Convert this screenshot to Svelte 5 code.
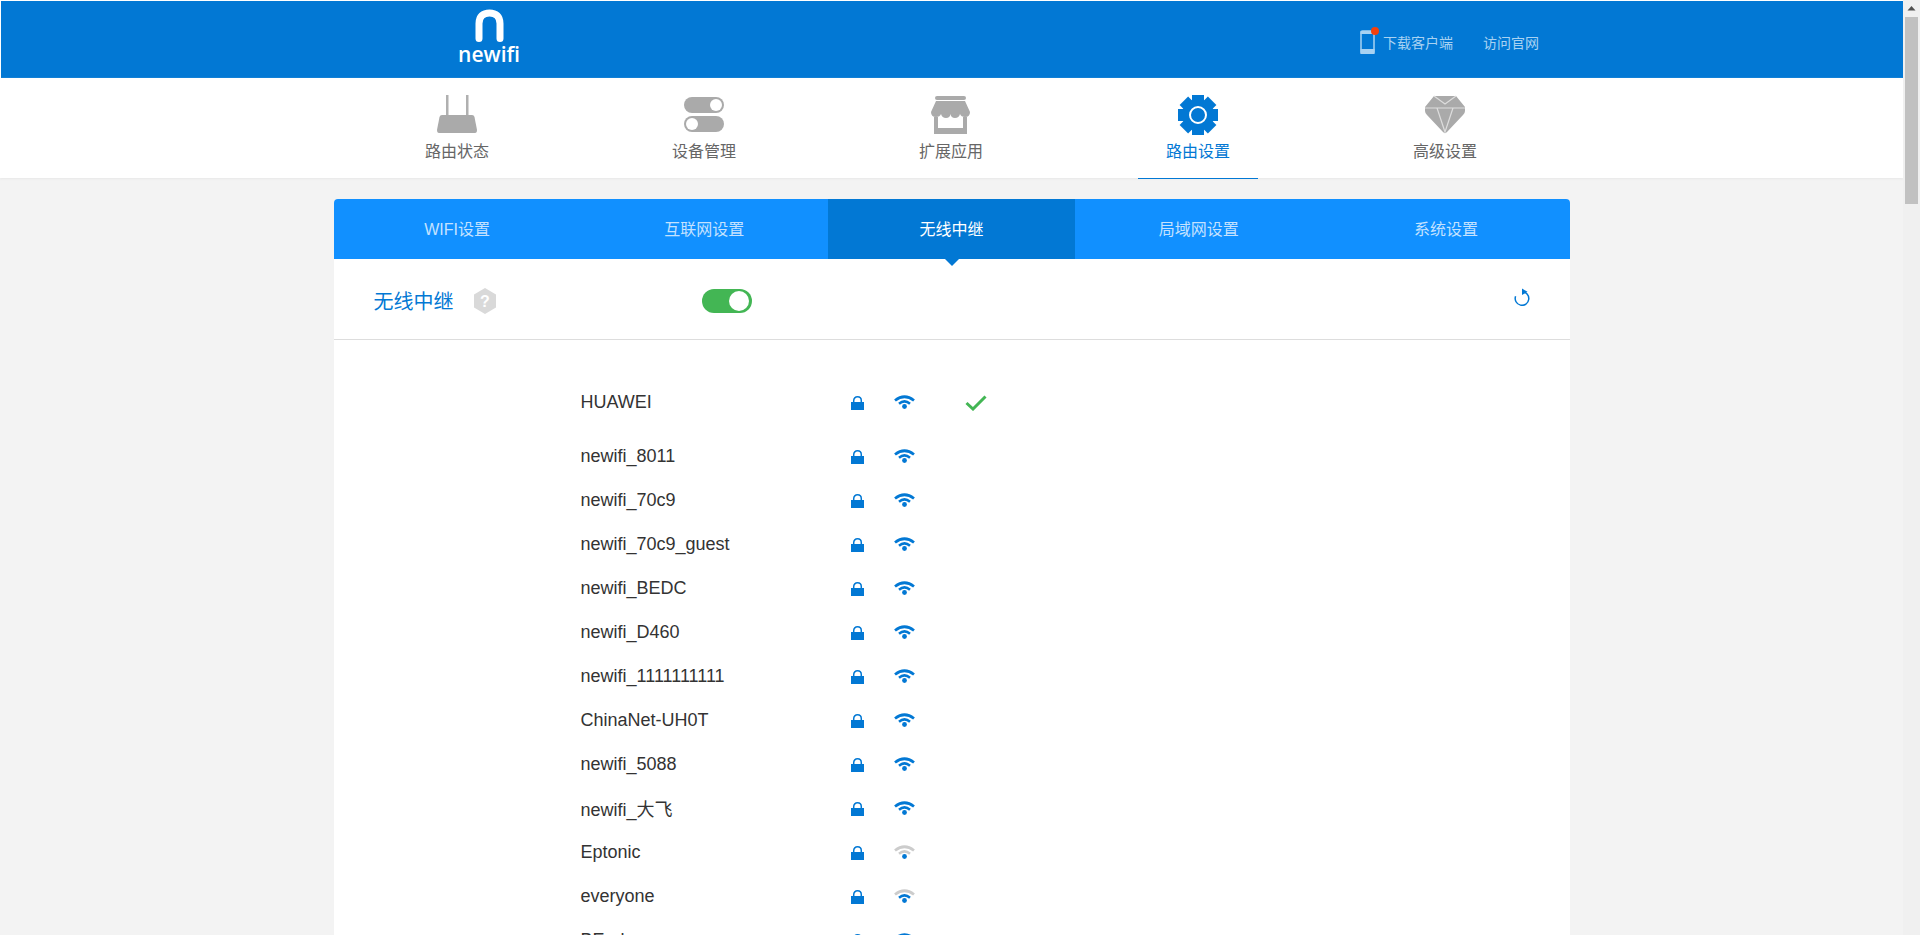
<script>
  const navItems = [
    { label: '路由状态', icon: 'router' },
    { label: '设备管理', icon: 'toggles' },
    { label: '扩展应用', icon: 'store' },
    { label: '路由设置', icon: 'gear', active: true },
    { label: '高级设置', icon: 'diamond' }
  ];
  const tabs = ['WIFI设置', '互联网设置', '无线中继', '局域网设置', '系统设置'];
  const networks = [
    { name: 'HUAWEI', connected: true },
    { name: 'newifi_8011' },
    { name: 'newifi_70c9' },
    { name: 'newifi_70c9_guest' },
    { name: 'newifi_BEDC' },
    { name: 'newifi_D460' },
    { name: 'newifi_1111111111' },
    { name: 'ChinaNet-UH0T' },
    { name: 'newifi_5088' },
    { name: 'newifi_大飞' },
    { name: 'Eptonic', outer: '#cccccc', inner: '#cccccc' },
    { name: 'everyone', outer: '#cccccc' },
    { name: 'BE_d' }
  ];
</script>

<div class="window">
  <div class="page">
    <header class="topbar">
      <div class="topbar-inner">
        <div class="logo">
          <svg width="29" height="33" viewBox="0 0 29 33">
            <path d="M4 29.500V14.500C4 7.500 8 4 14.500 4S25 7.500 25 14.500V29.500" fill="none" stroke="#fff" stroke-width="7" stroke-linecap="round" />
          </svg>
          <span>newifi</span>
        </div>
        <div class="links">
          <span class="download">
            <svg width="20" height="27" viewBox="0 0 20 27">
              <rect x="1" y="4" width="13" height="22.500" rx="1.500" fill="none" stroke="#a8d2f2" stroke-width="1.500" />
              <rect x="0.500" y="22" width="14" height="5" fill="#a8d2f2" />
              <rect x="0.500" y="4" width="14" height="3" fill="#a8d2f2" />
              <circle cx="15" cy="4" r="4" fill="#f4400c" />
            </svg>
            下载客户端
          </span>
          <span>访问官网</span>
        </div>
      </div>
    </header>

    <nav class="mainnav">
      <div class="nav-inner">
        {#each navItems as item}
          <div class="nav-item" class:active={item.active}>
            <div class="nav-icon">
              {#if item.icon === 'router'}
                <svg width="40" height="40" viewBox="0 0 40 40">
                  <rect x="9" y="0" width="2.500" height="22" fill="#b0b0b0" />
                  <rect x="29" y="0" width="2.500" height="22" fill="#b0b0b0" />
                  <path d="M5 20H35Q37 20 37.500 22L40 35Q40 38 38 38H2Q0 38 0 35L2.500 22Q3 20 5 20Z" fill="#aaa" />
                </svg>
              {:else if item.icon === 'toggles'}
                <svg width="40" height="40" viewBox="0 0 40 40">
                  <rect x="0" y="2" width="40" height="16" rx="8" fill="#aaa" />
                  <circle cx="32" cy="10" r="6" fill="#fff" />
                  <rect x="0" y="21" width="40" height="16" rx="8" fill="#aaa" />
                  <circle cx="8" cy="29" r="6" fill="#fff" />
                </svg>
              {:else if item.icon === 'store'}
                <svg width="40" height="40" viewBox="0 0 40 40">
                  <rect x="4" y="1" width="31" height="4" rx="2" fill="#aaa" />
                  <path d="M3 22H36V39H3Z" fill="#aaa" />
                  <rect x="7" y="20" width="25" height="13" fill="#fff" />
                  <path d="M5 6H34L39 17Q39 22 34 22Q30 22 29 19Q28 23 24 23Q20 23 19.500 19Q19 23 15 23Q11 23 10 19Q9 22 5 22Q0 22 0 17Z" fill="#aaa" />
                </svg>
              {:else if item.icon === 'gear'}
                <svg width="40" height="40" viewBox="0 0 40 40">
                  <circle cx="20" cy="20" r="16" fill="#0278d4" />
                  <rect x="14" y="0" width="12" height="40" fill="#0278d4" />
                  <rect x="0" y="14" width="40" height="12" fill="#0278d4" />
                  <rect x="14" y="0" width="12" height="40" fill="#0278d4" transform="rotate(45 20 20)" />
                  <rect x="14" y="0" width="12" height="40" fill="#0278d4" transform="rotate(-45 20 20)" />
                  <circle cx="20" cy="20" r="8" fill="none" stroke="#fff" stroke-width="2" />
                </svg>
              {:else}
                <svg width="40" height="40" viewBox="0 0 40 40">
                  <path d="M9 1H31L40 12V16Q40 18 38 20L22 37Q20 39 18 37L2 20Q0 18 0 16V12Z" fill="#aaa" />
                  <path d="M0 13H40M9 1L20 9L31 1M12 13L20 37L28 13" fill="none" stroke="#ddd" stroke-width="1.200" />
                </svg>
              {/if}
            </div>
            <span class="nav-label">{item.label}</span>
          </div>
        {/each}
      </div>
    </nav>

    <main class="card">
      <div class="tabs">
        {#each tabs as tab, i}
          <div class="tab" class:current={i === 2}>{tab}</div>
        {/each}
      </div>
      <div class="card-head">
        <span class="title">无线中继</span>
        <svg class="help" width="22" height="26" viewBox="0 0 22 26">
          <path d="M11 0L22 6.500V19.500L11 26L0 19.500V6.500Z" fill="#d9d9d9" />
          <text x="11" y="19" text-anchor="middle" fill="#fff" font-size="16" font-weight="700" font-family="Liberation Sans, sans-serif">?</text>
        </svg>
        <div class="switch"><div class="knob"></div></div>
        <svg class="refresh" width="18" height="18" viewBox="0 0 18 18">
          <path d="M9 3.700A6.800 6.800 0 1 1 2.600 8.200" fill="none" stroke="#0278d4" stroke-width="1.500" />
          <path d="M9 0.500L14.500 3.800L9 7Z" fill="#0278d4" />
        </svg>
      </div>
      <div class="list">
        {#each networks as n}
          <div class="row" class:connected={n.connected}>
            <span class="name">{n.name}</span>
            <svg class="lock" width="13" height="14" viewBox="0 0 13 14">
              <path d="M2.700 7V4.700C2.700 2.300 4.300 0.800 6.500 0.800S10.300 2.300 10.300 4.700V7" fill="none" stroke="#0278d4" stroke-width="1.500" />
              <rect x="0" y="6" width="13" height="8" fill="#0278d4" />
            </svg>
            <svg class="wifi" width="21" height="14" viewBox="0 0 21 14">
              <path d="M1 5.500Q10.500 -2 20 5.500" fill="none" stroke={n.outer ?? '#0278d4'} stroke-width="2.800" />
              <path d="M5 8.800Q10.500 4 16 8.800" fill="none" stroke={n.inner ?? '#0278d4'} stroke-width="2.500" />
              <circle cx="10.500" cy="11.500" r="2.400" fill="#0278d4" />
            </svg>
            {#if n.connected}
              <svg class="check" width="22" height="16" viewBox="0 0 22 16">
                <path d="M1.500 8L8 14L20.500 1.500" fill="none" stroke="#43b654" stroke-width="3" />
              </svg>
            {/if}
          </div>
        {/each}
      </div>
    </main>
  </div>

  <aside class="scrollbar">
    <div class="arrow">
      <svg width="17" height="17" viewBox="0 0 17 17"><path d="M8.500 6L4.500 10.500H12.500Z" fill="#505050" /></svg>
    </div>
    <div class="thumb"></div>
  </aside>
</div>

<style>
  :global(html), :global(body) {
    margin: 0;
    height: 100%;
    overflow: hidden;
  }
  .window {
    display: flex;
    height: 935px;
    overflow: hidden;
    background: #f3f3f3;
    font-family: "Liberation Sans", "Noto Sans CJK SC", sans-serif;
  }
  .page {
    flex: 1;
    min-width: 0;
    height: 935px;
    overflow: hidden;
  }
  .scrollbar {
    width: 17px;
    flex: none;
    background: #f0f0f0;
    display: flex;
    flex-direction: column;
    align-items: center;
  }
  .arrow {
    height: 17px;
  }
  .thumb {
    width: 13px;
    height: 187px;
    background: #c1c1c1;
  }
  .topbar {
    height: 77px;
    background: #0278d4;
    border-top: 1px solid #fff;
    border-left: 1px solid #fff;
  }
  .topbar-inner {
    width: 1236px;
    height: 100%;
    margin: 0 auto;
    padding: 0 31px 0 125px;
    box-sizing: border-box;
    display: flex;
    justify-content: space-between;
    align-items: center;
  }
  .logo {
    display: flex;
    flex-direction: column;
    align-items: center;
    width: 60px;
    color: #fff;
    font-family: "Open Sans", sans-serif;
    font-size: 21px;
    font-weight: 600;
    line-height: 20px;
    padding-bottom: 7px;
  }
  .logo svg {
    display: block;
    margin-bottom: 2px;
  }
  .links {
    display: flex;
    align-items: center;
    gap: 30px;
    color: #a8d2f2;
    font-size: 14px;
    padding-top: 4px;
  }
  .download {
    display: flex;
    align-items: center;
    gap: 3px;
  }
  .download svg {
    margin-top: -2px;
  }
  .mainnav {
    height: 100px;
    background: #fff;
    box-shadow: 0 1px 2px #e8e8e8;
  }
  .nav-inner {
    width: 1236px;
    height: 100%;
    margin: 0 auto;
    padding-right: 1px;
    box-sizing: border-box;
    display: flex;
  }
  .nav-item {
    flex: 1;
    display: flex;
    flex-direction: column;
    align-items: center;
    position: relative;
    padding-top: 17px;
    box-sizing: border-box;
    color: #666;
  }
  .nav-icon {
    height: 40px;
  }
  .nav-icon svg {
    display: block;
  }
  .nav-label {
    font-size: 16px;
    line-height: 24px;
    margin-top: 5px;
  }
  .nav-item.active {
    color: #0278d4;
  }
  .nav-item.active::after {
    content: "";
    position: absolute;
    left: 50%;
    bottom: -1px;
    width: 120px;
    height: 1px;
    margin-left: -60px;
    background: #0278d4;
  }
  .card {
    width: 1236px;
    margin: 21px auto 0;
    background: #fff;
    border-radius: 4px 4px 0 0;
  }
  .tabs {
    display: flex;
    height: 60px;
    background: #1190ff;
    border-radius: 4px 4px 0 0;
  }
  .tab {
    flex: 1;
    display: flex;
    align-items: center;
    justify-content: center;
    position: relative;
    color: #c4e2ff;
    font-size: 16px;
    padding-bottom: 2px;
    box-sizing: border-box;
  }
  .tab.current {
    background: #0278d4;
    color: #fff;
  }
  .tab.current::after {
    content: "";
    position: absolute;
    left: 50%;
    top: 100%;
    margin-left: -7px;
    border-left: 7px solid transparent;
    border-right: 7px solid transparent;
    border-top: 7px solid #0278d4;
  }
  .card-head {
    height: 81px;
    box-sizing: border-box;
    border-bottom: 1px solid #ddd;
    display: flex;
    align-items: center;
    padding: 4px 40px 0 40px;
  }
  .title {
    font-size: 20px;
    color: #0278d4;
    width: 100px;
    margin-top: -2px;
  }
  .help {
    display: block;
  }
  .switch {
    width: 50px;
    height: 24px;
    margin-left: 206px;
    border-radius: 12px;
    background: #43b654;
    display: flex;
    justify-content: flex-end;
    align-items: center;
    padding-right: 3px;
    box-sizing: border-box;
  }
  .knob {
    width: 20px;
    height: 20px;
    border-radius: 50%;
    background: #fff;
  }
  .refresh {
    margin-left: auto;
    margin-top: -9px;
    margin-right: -1px;
  }
  .list {
    padding: 40px 0 0 247px;
  }
  .row {
    display: flex;
    align-items: center;
    height: 44px;
    color: #333;
    font-size: 18px;
  }
  .row.connected {
    margin-bottom: 10px;
  }
  .name {
    width: 270px;
  }
  .lock {
    margin-top: 2px;
    margin-right: 30px;
  }
  .wifi {
    margin-right: 50px;
  }
  .check {
    margin-top: 1px;
  }
</style>
